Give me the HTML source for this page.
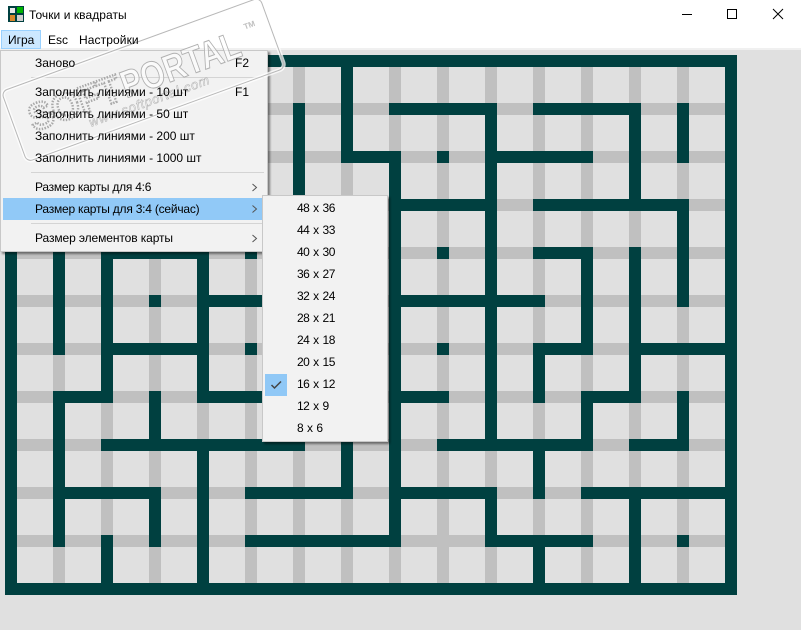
<!DOCTYPE html>
<html lang="ru"><head><meta charset="utf-8"><title>Точки и квадраты</title>
<style>
html,body{margin:0;padding:0}
body{width:801px;height:630px;position:relative;overflow:hidden;background:#e0e0e0;font:12px "Liberation Sans","Noto Sans CJK SC",sans-serif;color:#000}
.a{position:absolute;white-space:nowrap;line-height:16px;height:16px}
.n{letter-spacing:-.5px;word-spacing:1px}
svg{position:absolute;left:0;top:0}
.menu{position:absolute;background:#f2f2f2;border:1px solid #c8c8c8;box-sizing:border-box;box-shadow:2px 2px 2px rgba(0,0,0,.45)}
.sep{position:absolute;height:1px;background:#d4d4d4}
</style></head><body>
<div style="position:absolute;left:0;top:0;width:801px;height:48px;background:#fff"></div>
<div style="position:absolute;left:0;top:48px;width:801px;height:2px;background:#f0f0f0"></div>

<svg width="801" height="630" viewBox="0 0 801 630">
<g fill="none" stroke="#c0c0c0" stroke-width="12">
<path d="M59 61V589M107 61V589M155 61V589M203 61V589M251 61V589M299 61V589M347 61V589M395 61V589M443 61V589M491 61V589M539 61V589M587 61V589M635 61V589M683 61V589"/>
<path d="M11 109H731M11 157H731M11 205H731M11 253H731M11 301H731M11 349H731M11 397H731M11 445H731M11 493H731M11 541H731"/>
</g>
<path fill="none" stroke="#004040" stroke-width="12" stroke-linecap="square" stroke-linejoin="miter" d="M11 61H731V589H11Z
M347 61V157H395V541M299 109V205M395 109H491V445M443 157h.01M491 157H587M539 109H635V205M539 205H683V301M683 109V157M395 205H491
M539 253H587V349H539V397M635 253V397M635 397H587V445M635 349H731M683 397V445H635M395 301H539M443 253h.01M443 349h.01M395 397H443M443 445H587M539 445V493M587 493H731M635 493V589
M395 493H491V541H587M539 541V589M683 541h.01M251 541H395M251 493H347V445M107 445H299M203 445V589M107 541V589
M59 541V397H107V253H203V397M107 349H203M203 301H299M203 397H299M155 301h.01M251 349h.01M251 253h.01M59 493H155V541M155 397V445M59 253V349"/>
</svg>

<!-- title icon -->
<svg width="801" height="30" viewBox="0 0 801 30">
<rect x="8" y="6" width="16" height="16" fill="#004040"/>
<rect x="10" y="8" width="5" height="5" fill="#e8e8e8"/>
<rect x="17" y="7" width="6" height="6" fill="#00b400"/>
<rect x="10" y="15" width="5" height="6" fill="#d8862a"/>
<rect x="17" y="15" width="6" height="6" fill="#cfcfcf"/>
<path d="M682 14.5H692" stroke="#000" stroke-width="1"/>
<rect x="727.5" y="9.5" width="9" height="9" fill="none" stroke="#000"/>
<path d="M773 9L783 19M783 9L773 19" stroke="#000" stroke-width="1"/>
</svg>

<!-- menu backgrounds -->
<div style="position:absolute;left:1px;top:30px;width:40px;height:19px;background:#cce8ff;border:1px solid #99d1ff;box-sizing:border-box"></div>
<div class="menu" style="left:0;top:50px;width:268px;height:202px"></div>
<div class="sep" style="left:31px;top:77px;width:233px"></div>
<div class="sep" style="left:31px;top:172px;width:233px"></div>
<div class="sep" style="left:31px;top:223px;width:233px"></div>
<div style="position:absolute;left:3px;top:198px;width:259px;height:22px;background:#91c9f7"></div>

<!-- watermark stamp -->
<svg width="801" height="200" viewBox="0 0 801 200">
<g transform="translate(27 162) rotate(-20)" font-family="'Liberation Sans',sans-serif">
<rect x="0" y="-75" width="275" height="75" rx="6" fill="none" stroke="#fff" stroke-opacity=".75" stroke-width="4"/>
<rect x="0" y="-75" width="275" height="75" rx="6" fill="none" stroke="#b8b8b8" stroke-width="1"/>
<text x="17" y="-26" font-size="38" font-weight="700" textLength="96" lengthAdjust="spacingAndGlyphs" fill="none" stroke="#a8a8a8" stroke-width="2.500" stroke-dasharray="1.500 1.500">SOFT</text>
<text x="115" y="-26" font-size="38" font-weight="700" textLength="125" lengthAdjust="spacingAndGlyphs" fill="#fff" fill-opacity=".6" stroke="#b0b0b0" stroke-width="1">PORTAL</text>
<text x="72" y="-11" font-size="13" font-style="italic" textLength="127" fill="#fff" fill-opacity=".5" stroke="#b0b0b0" stroke-width=".5">www.softportal.com</text>
<text x="250" y="-50" font-size="8" font-weight="700" fill="#c0c0c0">TM</text>
</g>
</svg>

<!-- title and menu bar text -->
<div class="a" style="left:29px;top:7px;letter-spacing:.06px">Точки и квадраты</div>
<div class="a" style="left:8px;top:32px">Игра</div>
<div class="a" style="left:48px;top:32px">Esc</div>
<div class="a" style="left:79px;top:32px;letter-spacing:.1px">Настройки</div>

<!-- main menu text -->
<div class="a" style="left:35px;top:55px">Заново</div>
<div class="a" style="left:235px;top:55px">F2</div>
<div class="a" style="left:35px;top:84px">Заполнить линиями - 10 шт</div>
<div class="a" style="left:235px;top:84px">F1</div>
<div class="a" style="left:35px;top:106px">Заполнить линиями - 50 шт</div>
<div class="a" style="left:35px;top:128px">Заполнить линиями - 200 шт</div>
<div class="a" style="left:35px;top:150px">Заполнить линиями - 1000 шт</div>
<div class="a" style="left:35px;top:179px;letter-spacing:-.25px">Размер карты для 4:6</div>
<div class="a" style="left:35px;top:201px;letter-spacing:-.22px">Размер карты для 3:4 (сейчас)</div>
<div class="a" style="left:35px;top:230px;letter-spacing:-.1px">Размер элементов карты</div>
<svg width="801" height="260" viewBox="0 0 801 260">
<path d="M252.5 184L256.5 187.5L252.5 191M252.5 205.500L256.500 209L252.500 212.500M252.500 235L256.500 238.500L252.500 242" fill="none" stroke="#555" stroke-width="1"/>
</svg>

<!-- submenu -->
<div class="menu" style="left:262px;top:195px;width:126px;height:247px"></div>
<div style="position:absolute;left:265px;top:374px;width:22px;height:22px;background:#90c8f6"></div>
<svg width="801" height="420" viewBox="0 0 801 420"><path d="M271.500 385L274.500 388L281 381.500" fill="none" stroke="#444" stroke-width="1.500"/></svg>
<div class="a n" style="left:297px;top:200px">48 x 36</div>
<div class="a n" style="left:297px;top:222px">44 x 33</div>
<div class="a n" style="left:297px;top:244px">40 x 30</div>
<div class="a n" style="left:297px;top:266px">36 x 27</div>
<div class="a n" style="left:297px;top:288px">32 x 24</div>
<div class="a n" style="left:297px;top:310px">28 x 21</div>
<div class="a n" style="left:297px;top:332px">24 x 18</div>
<div class="a n" style="left:297px;top:354px">20 x 15</div>
<div class="a n" style="left:297px;top:376px">16 x 12</div>
<div class="a n" style="left:297px;top:398px">12 x 9</div>
<div class="a n" style="left:297px;top:420px">8 x 6</div>
</body></html>
